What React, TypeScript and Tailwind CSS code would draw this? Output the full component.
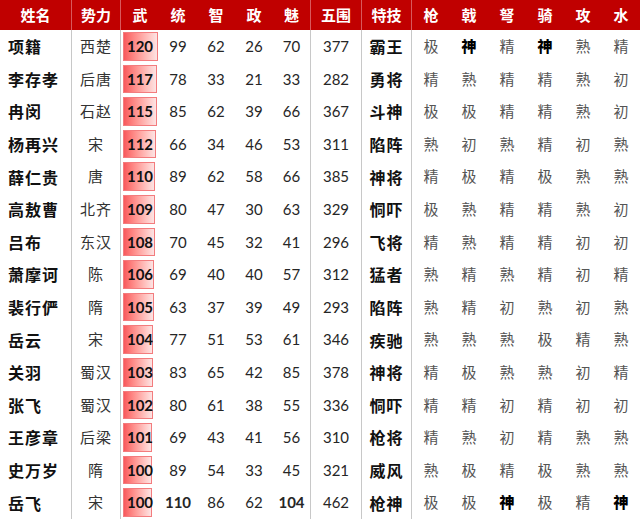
import React from 'react';

type Hero = {
  name: string;
  faction: string;
  stats: number[]; // 武 统 智 政 魅
  total: number;
  skill: string;
  grades: string[]; // 枪 戟 弩 骑 攻 水
};

const heroes: Hero[] = [
  { name: '项籍', faction: '西楚', stats: [120, 99, 62, 26, 70], total: 377, skill: '霸王', grades: ['极', '神', '精', '神', '熟', '精'] },
  { name: '李存孝', faction: '后唐', stats: [117, 78, 33, 21, 33], total: 282, skill: '勇将', grades: ['精', '熟', '精', '精', '熟', '初'] },
  { name: '冉闵', faction: '石赵', stats: [115, 85, 62, 39, 66], total: 367, skill: '斗神', grades: ['极', '极', '精', '精', '熟', '初'] },
  { name: '杨再兴', faction: '宋', stats: [112, 66, 34, 46, 53], total: 311, skill: '陷阵', grades: ['熟', '初', '熟', '精', '初', '熟'] },
  { name: '薛仁贵', faction: '唐', stats: [110, 89, 62, 58, 66], total: 385, skill: '神将', grades: ['精', '极', '精', '极', '熟', '熟'] },
  { name: '高敖曹', faction: '北齐', stats: [109, 80, 47, 30, 63], total: 329, skill: '恫吓', grades: ['极', '熟', '精', '精', '熟', '初'] },
  { name: '吕布', faction: '东汉', stats: [108, 70, 45, 32, 41], total: 296, skill: '飞将', grades: ['精', '熟', '精', '精', '初', '初'] },
  { name: '萧摩诃', faction: '陈', stats: [106, 69, 40, 40, 57], total: 312, skill: '猛者', grades: ['熟', '精', '熟', '精', '初', '精'] },
  { name: '裴行俨', faction: '隋', stats: [105, 63, 37, 39, 49], total: 293, skill: '陷阵', grades: ['熟', '精', '初', '熟', '初', '熟'] },
  { name: '岳云', faction: '宋', stats: [104, 77, 51, 53, 61], total: 346, skill: '疾驰', grades: ['熟', '熟', '熟', '极', '精', '熟'] },
  { name: '关羽', faction: '蜀汉', stats: [103, 83, 65, 42, 85], total: 378, skill: '神将', grades: ['精', '极', '熟', '熟', '初', '精'] },
  { name: '张飞', faction: '蜀汉', stats: [102, 80, 61, 38, 55], total: 336, skill: '恫吓', grades: ['精', '精', '初', '精', '初', '初'] },
  { name: '王彦章', faction: '后梁', stats: [101, 69, 43, 41, 56], total: 310, skill: '枪将', grades: ['精', '熟', '初', '精', '熟', '熟'] },
  { name: '史万岁', faction: '隋', stats: [100, 89, 54, 33, 45], total: 321, skill: '威风', grades: ['熟', '极', '精', '极', '熟', '熟'] },
  { name: '岳飞', faction: '宋', stats: [100, 110, 86, 62, 104], total: 462, skill: '枪神', grades: ['极', '极', '神', '极', '精', '神'] },
];

const headers = ['姓名', '势力', '武', '统', '智', '政', '魅', '五围', '特技', '枪', '戟', '弩', '骑', '攻', '水'];

// columns that carry a grey rule on their right edge
const ruled = new Set([0, 1, 6, 7, 8]);

const cjk = "font-['Noto_Sans_CJK_SC',sans-serif]";
const num = "font-['Lato','Liberation_Sans',sans-serif]";

export default function App() {
  return (
    <div className="w-[640px] h-[519px] bg-white overflow-hidden">
      <div className="grid grid-cols-[72px_49px_repeat(5,38px)_51px_50px_repeat(6,38px)] grid-rows-[30px_repeat(15,32.6px)]">
        {headers.map((h, i) => (
          <div
            key={h}
            className={`flex items-center justify-center bg-[#c00000] text-white text-[15px] font-bold ${cjk} ${ruled.has(i) ? 'border-r border-[#d9595c]' : ''}`}
          >
            {h}
          </div>
        ))}

        {heroes.map((hero) => (
          <React.Fragment key={hero.name}>
            <div className={`flex items-center pl-[8px] border-r border-[#c8c8c8] text-[16px] font-bold tracking-[1px] text-[#111] ${cjk}`}>
              {hero.name}
            </div>
            <div className={`flex items-center justify-center border-r border-[#c8c8c8] text-[15px] text-[#333] tracking-[1px] ${cjk}`}>
              {hero.faction}
            </div>

            {/* 武 with a data bar */}
            <div className="relative flex items-center justify-center">
              <div
                className="absolute left-[2px] top-[2px] bottom-[2px] border border-[#f37c7e] bg-gradient-to-r from-[#f8585c] to-[#fce4e4]"
                style={{ width: `${(hero.stats[0] / 120) * 35}px` }}
              />
              <span className={`relative text-[15px] font-bold text-[#111] ${num}`}>{hero.stats[0]}</span>
            </div>

            {hero.stats.slice(1).map((v, i) => (
              <div
                key={i}
                className={`flex items-center justify-center text-[15px] text-[#262626] ${num} ${v > 100 ? 'font-bold text-[#111]' : ''} ${i === 3 ? 'border-r border-[#c8c8c8]' : ''}`}
              >
                {v}
              </div>
            ))}

            <div className={`flex items-center justify-center border-r border-[#c8c8c8] text-[15px] text-[#262626] ${num}`}>
              {hero.total}
            </div>
            <div className={`flex items-center justify-center border-r border-[#c8c8c8] text-[16px] font-bold tracking-[1px] text-[#111] ${cjk}`}>
              {hero.skill}
            </div>

            {hero.grades.map((g, i) => (
              <div
                key={i}
                className={`flex items-center justify-center text-[15px] ${cjk} ${g === '神' ? 'font-black text-black' : 'text-[#555]'}`}
              >
                {g}
              </div>
            ))}
          </React.Fragment>
        ))}
      </div>
    </div>
  );
}
